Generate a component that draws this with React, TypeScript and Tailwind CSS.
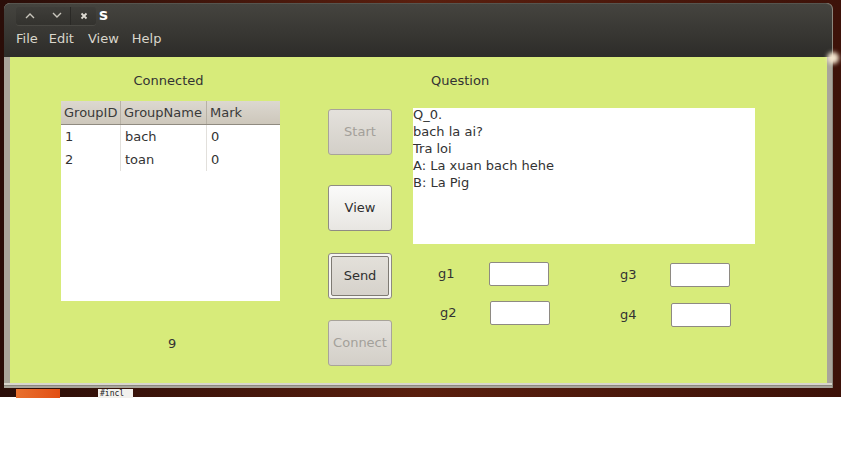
import type { ReactElement } from 'react'

const font = { fontFamily: '"DejaVu Sans", "Liberation Sans", sans-serif' }

function TitleButtons(): ReactElement {
  return (
    <div className="flex h-[18px] items-stretch ml-[12px] rounded-[3px] bg-gradient-to-b from-[#3f3e3a] to-[#33322e] shadow-[0_1px_0_#4a4944]">
      <div className="flex w-[27px] items-center justify-center">
        <svg width="10" height="7" viewBox="0 0 10 7"><path d="M1 6 L5 2 L9 6" stroke="#c8c5bc" strokeWidth="1.4" fill="none" /></svg>
      </div>
      <div className="flex w-[27px] items-center justify-center">
        <svg width="10" height="7" viewBox="0 0 10 7"><path d="M1 1 L5 5 L9 1" stroke="#c8c5bc" strokeWidth="1.4" fill="none" /></svg>
      </div>
      <div className="flex w-[26px] items-center justify-center border-l border-[#2a2926]">
        <svg width="8" height="8" viewBox="0 0 8 8"><path d="M1.5 1.5 L6.5 6.5 M6.5 1.5 L1.5 6.5" stroke="#dedbd3" strokeWidth="1.8" fill="none" /></svg>
      </div>
    </div>
  )
}

function Btn({ label, kind }: { label: string; kind: 'disabled' | 'normal' | 'default' }): ReactElement {
  if (kind === 'default') {
    return (
      <div className="h-[46px] w-[64px] rounded-[3px] border border-[#8d8980] bg-[#f6f5f2] p-[2px]">
        <div className="flex h-full w-full items-center justify-center rounded-[2px] border border-[#7e7a73] bg-gradient-to-b from-[#e3e0da] to-[#d6d2cb] text-[13px] text-[#2f2f2f]">
          {label}
        </div>
      </div>
    )
  }
  const cls =
    kind === 'disabled'
      ? 'border-[#a8a39a] from-[#e4e1dc] to-[#d3cfc8] text-[#a3a09a]'
      : 'border-[#8f8b83] from-[#fbfbfa] to-[#e8e6e2] text-[#2f2f2f]'
  return (
    <div className={`flex h-[46px] w-[64px] items-center justify-center rounded-[3px] border bg-gradient-to-b text-[13px] ${cls}`}>
      {label}
    </div>
  )
}

function Field({ label, lx, fx }: { label: string; lx: string; fx: string }): ReactElement {
  return (
    <div className="flex h-[24px] items-center">
      <span className={`text-[13px] text-[#333] ${lx}`}>{label}</span>
      <div className={`h-[24px] w-[60px] rounded-[2px] border border-[#8e8a82] bg-white ${fx}`} />
    </div>
  )
}

export default function App(): ReactElement {
  const rows = [
    ['1', 'bach', '0'],
    ['2', 'toan', '0'],
  ]
  return (
    <div className="h-[460px] w-[841px] overflow-hidden bg-white" style={font}>
      <div className="h-[397px] bg-gradient-to-r from-[#2a0d08] via-[#5a1f0e] to-[#3d1209] pt-[3px] relative">
        <div className="absolute right-[2px] top-[52px] h-[12px] w-[12px] rounded-full bg-[#f4e6d0] blur-[2px]" />
        <div className="ml-[4px] w-[828px] rounded-t-[6px] bg-[#a9a59b] pr-[5px] pl-[6px] pb-[2px] shadow-[1px_0_0_#8c887e]">
          <div className="-mx-[6px] -mr-[5px] rounded-t-[6px] bg-gradient-to-b from-[#45443f] via-[#393834] to-[#2d2c29] border-t border-[#56554f]">
            <div className="flex h-[22px] items-center pt-[1px]">
              <TitleButtons />
              <span className="ml-[3px] text-[15px] leading-[15px] font-bold text-white">s</span>
            </div>
            <div className="flex h-[31px] items-center gap-[11px] pb-[5px] pl-[12px] text-[13px] text-[#d9d6cc]">
              <span>File</span>
              <span>Edit</span>
              <span className="ml-[3px]">View</span>
              <span className="ml-[2px]">Help</span>
            </div>
          </div>
          <div className="flex h-[326px] bg-[#d7eb7a] text-[#333]">
            <div className="ml-[51px] flex w-[219px] flex-col">
              <div className="mt-[14px] h-[17px] text-center text-[13px] pr-[4px]">Connected</div>
              <div className="mt-[13px] h-[200px] bg-white">
                <div className="flex h-[24px] border-b border-[#8f8a80] bg-gradient-to-b from-[#dcd8d0] to-[#cdc7bb] text-[13px] text-[#3a3a3a]">
                  <div className="flex w-[60px] items-center pl-[3px] border-r border-[#b7b1a5]">GroupID</div>
                  <div className="flex w-[86px] items-center pl-[3px] border-r border-[#b7b1a5]">GroupName</div>
                  <div className="flex flex-1 items-center pl-[3px]">Mark</div>
                </div>
                {rows.map((r, i) => (
                  <div key={i} className="flex h-[23px] text-[13px] text-[#333]">
                    <div className="flex w-[60px] items-center pl-[4px] border-r border-[#e2e0dc]">{r[0]}</div>
                    <div className="flex w-[86px] items-center pl-[4px] border-r border-[#e2e0dc]">{r[1]}</div>
                    <div className="flex flex-1 items-center pl-[4px]">{r[2]}</div>
                  </div>
                ))}
              </div>
              <div className="mt-[33px] pl-[107px] text-[13px]">9</div>
            </div>
            <div className="ml-[48px] flex w-[64px] flex-col pt-[52px]">
              <Btn label="Start" kind="disabled" />
              <div className="mt-[30px]"><Btn label="View" kind="normal" /></div>
              <div className="mt-[22px]"><Btn label="Send" kind="default" /></div>
              <div className="mt-[21px]"><Btn label="Connect" kind="disabled" /></div>
            </div>
            <div className="ml-[21px] flex w-[342px] flex-col">
              <div className="mt-[14px] h-[17px] pl-[18px] text-[13px]">Question</div>
              <div className="mt-[20px] h-[136px] bg-white text-[13px] leading-[17px] text-[#333]">
                <div className="-mt-[2px]">
                  <div>Q_0.</div>
                  <div>bach la ai?</div>
                  <div>Tra loi</div>
                  <div>A: La xuan bach hehe</div>
                  <div>B: La Pig</div>
                </div>
              </div>
              <div className="mt-[18px] flex">
                <div className="flex w-[207px] flex-col gap-[15px]">
                  <Field label="g1" lx="ml-[25px]" fx="ml-[34px]" />
                  <Field label="g2" lx="ml-[27px]" fx="ml-[33px]" />
                </div>
                <div className="flex flex-col gap-[16px] pt-[1px]">
                  <Field label="g3" lx="" fx="ml-[33px]" />
                  <Field label="g4" lx="" fx="ml-[34px]" />
                </div>
              </div>
            </div>
          </div>
          <div className="-mx-[6px] -mr-[5px] h-[3px] bg-[#d9d6cd] border-b border-[#8c887e]" />
        </div>
        <div className="mt-[1px] flex h-[9px] items-start">
          <div className="ml-[16px] h-[9px] w-[44px] bg-gradient-to-r from-[#e8702e] to-[#e24e12]" />
          <div className="ml-[38px] h-[9px] w-[35px] bg-[#f2f1ee] overflow-hidden text-[8px] leading-[9px] pl-[2px] text-[#222]" style={{ fontFamily: '"DejaVu Sans Mono", monospace' }}>#incl</div>
        </div>
      </div>
    </div>
  )
}
